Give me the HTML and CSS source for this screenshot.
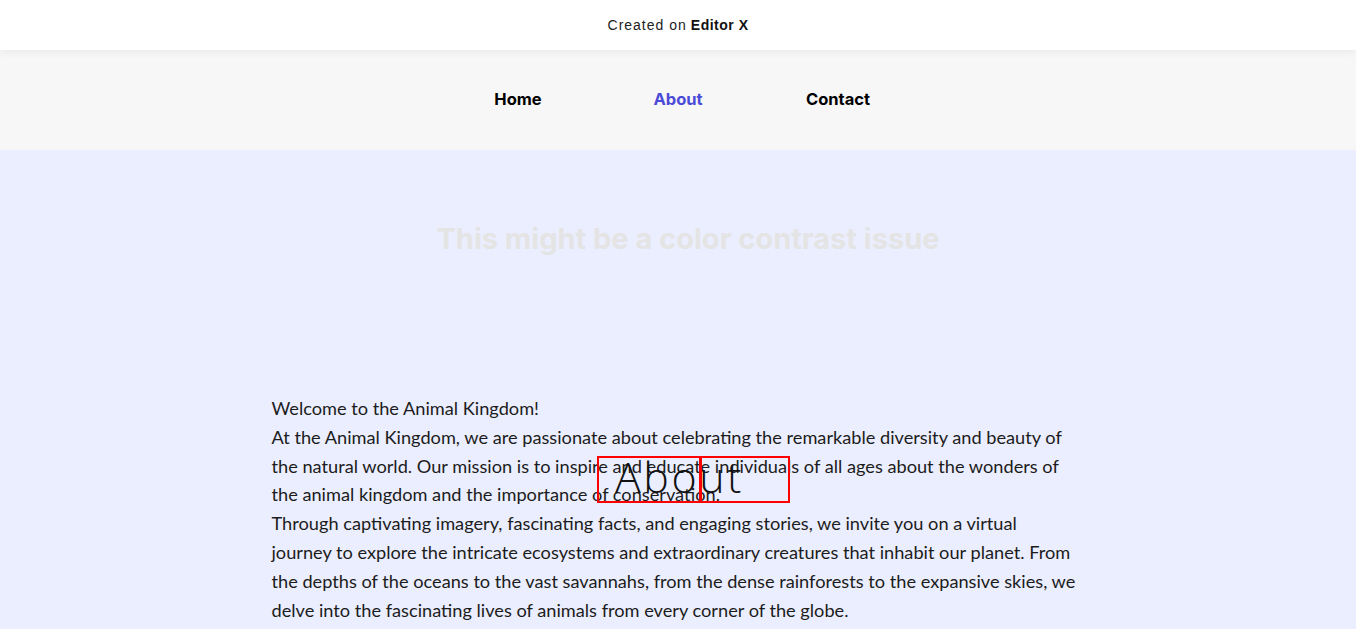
FILE: index.html
```html
<!DOCTYPE html>
<html>
<head>
<meta charset="utf-8">
<link rel="stylesheet" href="styles.css">
</head>
<body>
<div class="topbar">Created on <b>Editor X</b></div>
<nav class="nav">
  <a class="nav-item">Home</a>
  <a class="nav-item active">About</a>
  <a class="nav-item">Contact</a>
</nav>
<main class="content">
  <h1 class="headline">This might be a color contrast issue</h1>
  <div class="body-text">
    <p>Welcome to the Animal Kingdom!</p>
    <p>At the Animal Kingdom, we are passionate about celebrating the remarkable diversity and beauty of the natural world. Our mission is to inspire and educate individuals of all ages about the wonders of the animal kingdom and the importance of conservation.</p>
    <p>Through captivating imagery, fascinating facts, and engaging stories, we invite you on a virtual journey to explore the intricate ecosystems and extraordinary creatures that inhabit our planet. From the depths of the oceans to the vast savannahs, from the dense rainforests to the expansive skies, we delve into the fascinating lives of animals from every corner of the globe.</p>
  </div>
  <div class="overlay">
    <span class="overlay-text">About</span>
    <span class="box box-a"></span>
    <span class="box box-b"></span>
  </div>
</main>
</body>
</html>
```

FILE: styles.css
```css
html, body {
  margin: 0;
  padding: 0;
}
body {
  background: #ebeefe;
  overflow: hidden;
}
.topbar {
  height: 50px;
  background: #ffffff;
  display: flex;
  align-items: center;
  justify-content: center;
  font-family: "Liberation Sans", Arial, sans-serif;
  font-size: 14px;
  letter-spacing: 1px;
  color: #222;
  box-shadow: 0 2px 8px rgba(0,0,0,0.06);
  position: relative;
  z-index: 2;
}
.topbar b {
  margin-left: 4px;
  font-weight: 700;
  color: #111;
  letter-spacing: 0.5px;
}
.nav {
  height: 100px;
  background: #f7f7f7;
  display: flex;
  justify-content: center;
  align-items: center;
}
.nav-item {
  width: 160px;
  text-align: center;
  font-family: "Inter", sans-serif;
  font-weight: 700;
  font-size: 16.5px;
  color: #000;
  margin-top: -2px;
}
.nav-item.active {
  color: #4b4bd8;
}
.content {
  position: relative;
  padding: 69px 0 0;
  font-family: "Lato", sans-serif;
}
.headline {
  margin: 0;
  padding-left: 20px;
  text-align: center;
  font-family: "Inter", sans-serif;
  font-weight: 700;
  font-size: 29px;
  letter-spacing: 0;
  color: #e4e4e4;
  line-height: 40px;
}
.body-text {
  width: 805px;
  padding-left: 2px;
  padding-right: 10px;
  margin: 135px auto 0;
  font-size: 18.2px;
  line-height: 28.8px;
  color: #1c1c1c;
}
.body-text p {
  margin: 0;
}
.overlay {
  position: absolute;
  left: 597px;
  top: 306px;
  width: 193px;
  height: 47px;
}
.overlay-text {
  position: absolute;
  left: 18px;
  top: -4px;
  font-family: "Open Sans", sans-serif;
  font-weight: 300;
  font-size: 43px;
  letter-spacing: 2.5px;
  color: #111;
  line-height: 50px;
}
.box {
  position: absolute;
  top: 0;
  height: 43px;
  border: 2px solid #ff0000;
}
.box-a {
  left: 0;
  width: 100px;
}
.box-b {
  left: 103px;
  width: 86px;
}
```
